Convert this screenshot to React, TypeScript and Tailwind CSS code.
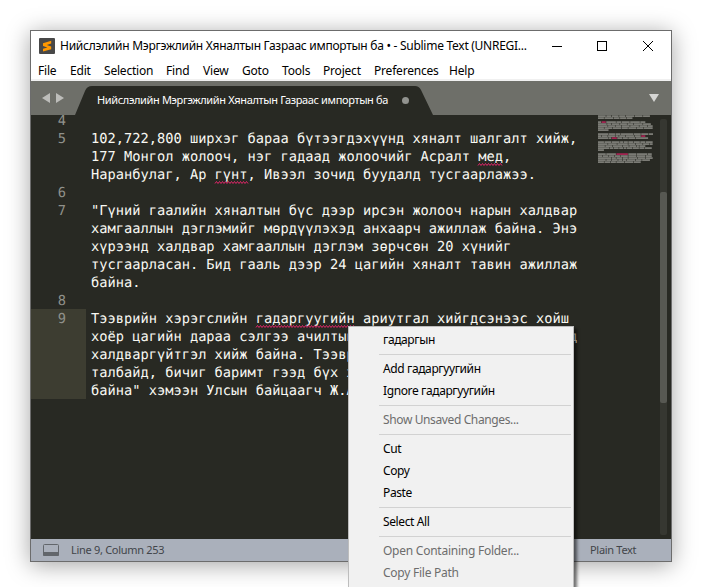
import React from "react";

type Line = { n?: number; text: string; wavy?: string; active?: boolean };

const lines: Line[] = [
  { n: 4, text: "" },
  { n: 5, text: "102,722,800 ширхэг бараа бүтээгдэхүүнд хяналт шалгалт хийж," },
  { text: "177 Монгол жолооч, нэг гадаад жолоочийг Асралт мед,", wavy: "мед" },
  { text: "Наранбулаг, Ар гүнт, Ивээл зочид буудалд тусгаарлажээ.", wavy: "гүнт" },
  { n: 6, text: "" },
  { n: 7, text: '"Гүний гаалийн хяналтын бүс дээр ирсэн жолооч нарын халдвар' },
  { text: "хамгааллын дэглэмийг мөрдүүлэхэд анхаарч ажиллаж байна. Энэ" },
  { text: "хүрээнд халдвар хамгааллын дэглэм зөрчсөн 20 хүнийг" },
  { text: "тусгаарласан. Бид гааль дээр 24 цагийн хяналт тавин ажиллаж" },
  { text: "байна." },
  { n: 8, text: "" },
  { n: 9, active: true, text: "Тээврийн хэрэгслийн гадаргуугийн ариутгал хийгдсэнээс хойш", wavy: "гадаргуугийн" },
  { active: true, text: "хоёр цагийн дараа сэлгээ ачилтын                          д" },
  { active: true, text: "халдваргүйтгэл хийж байна. Тээвр" },
  { active: true, text: "талбайд, бичиг баримт гээд бүх х" },
  { active: true, text: 'байна" хэмээн Улсын байцаагч Ж.А' },
];

function Wavy({ chars }: { chars: number }) {
  const w = chars * 8.25;
  let d = "M0 2.5";
  for (let x = 1.5, i = 0; x <= w; x += 1.5, i++) d += ` L${x} ${i % 2 ? 2.5 : 0.5}`;
  return (
    <svg className="absolute left-0 top-[14px] overflow-visible" width={w} height="3">
      <path d={d} fill="none" stroke="#f0266f" strokeWidth="0.9" />
    </svg>
  );
}

function CodeText({ line }: { line: Line }) {
  if (!line.wavy) return <>{line.text}</>;
  const [before, after] = line.text.split(line.wavy);
  return (
    <>
      {before}
      <span className="relative">
        {line.wavy}
        <Wavy chars={line.wavy.length} />
      </span>
      {after}
    </>
  );
}

// Word lengths of each minimap row; an empty array marks a blank row.
const mini: number[][] = [
  [8, 5, 7, 6, 9, 8, 7],
  [6, 9, 6, 6, 6],
  [],
  [3, 4, 10, 5, 8, 10, 5],
  [9, 4, 8, 7, 6, 9, 8],
  [10, 7, 6, 8, 9, 8, 5],
  [6, 8, 9, 6, 8, 7, 9],
  [11],
  [],
  [11, 6, 5, 13, 7, 7, 5],
  [3, 6, 7, 3, 6, 9, 6, 4],
  [11, 2, 5, 5, 5, 7, 13],
  [],
  [6, 7, 8, 3, 4, 5, 6, 5, 7],
  [10, 9, 11, 7, 7, 6, 3],
  [7, 7, 10, 6, 7, 2, 6],
  [12, 3, 5, 4, 2, 6, 6, 5, 7],
  [6],
  [],
  [8, 10, 12, 8, 11, 4],
  [4, 6, 5, 6, 7, 8, 9, 6],
  [14, 4, 6, 5, 9, 8, 7],
  [8, 5, 6, 4, 3, 9, 6, 8],
  [6, 6, 5, 8, 9, 7],
];
const flagged = ["3-1", "10-7", "11-2", "19-2"];

function Minimap() {
  const rects: React.ReactNode[] = [];
  mini.forEach((row, r) => {
    let x = 0;
    row.forEach((w, i) => {
      const hot = flagged.includes(`${r}-${i}`);
      rects.push(
        <rect key={`${r}-${i}`} x={x * 0.92} y={r * 2 + 0.3} width={w * 0.92 + 0.4} height="1.6" fill={hot ? "#c0245c" : "#9c9c96"} fillOpacity={hot ? 0.9 : 0.8} />
      );
      x += w + 1;
    });
  });
  return (
    <svg className="block" width="55" height="50">
      {rects}
    </svg>
  );
}

const menuItems = [
  { label: "File", w: "w-[32px]" },
  { label: "Edit", w: "w-[34px]" },
  { label: "Selection", w: "w-[62px]" },
  { label: "Find", w: "w-[37px]" },
  { label: "View", w: "w-[39px]" },
  { label: "Goto", w: "w-[40px]" },
  { label: "Tools", w: "w-[41px]" },
  { label: "Project", w: "w-[51px]" },
  { label: "Preferences", w: "w-[75px]" },
  { label: "Help", w: "w-[40px]" },
];

function Divider() {
  return <div className="ml-[30px] mr-[2px] h-[7px] pt-[3px]"><div className="h-px bg-[#d2d2d2]" /></div>;
}

function Item({ children, off }: { children: React.ReactNode; off?: boolean }) {
  return <div className={`h-[22px] pl-[34px] leading-[22px] whitespace-nowrap ${off ? "text-[#6d6d6d]" : "text-black"}`}>{children}</div>;
}

export default function App() {
  return (
    <div className="relative h-[587px] w-[701px] overflow-hidden bg-white p-[30px] pr-[29px] font-['Noto_Sans','Open_Sans',sans-serif] text-[12px]">
      <div className="flex h-[532px] w-[642px] flex-col border border-[#6c6c6c] bg-white shadow-[0_3px_22px_rgba(0,0,0,0.36)]">
        <div className="flex h-[29px] shrink-0 items-center pl-[8px]">
          <svg width="16" height="16" viewBox="0 0 16 16">
            <rect width="16" height="16" rx="1" fill="#484848" />
            <path d="M12.2 2.8v2.7L7.8 6.9l4.4 1.5v2.9L4 13.6v-2.8l4.4-1.4L4 7.9V5.2z" fill="#ff9800" />
          </svg>
          <div className="mt-px ml-[5px] w-[490px] whitespace-pre text-[12px] tracking-[-0.27px] text-black">
            Нийслэлийн Мэргэжлийн Хяналтын Газраас импортын ба • - Sublime Text (UNREGI...
          </div>
          <svg className="ml-[2px]" width="102" height="12" fill="none" stroke="#000" shapeRendering="crispEdges">
            <path d="M0 6.5h10M45.5 1.5h9v9h-9z" />
            <path d="M91 1l10 10M101 1L91 11" shapeRendering="auto" />
          </svg>
        </div>
        <div className="flex h-[21px] shrink-0 items-center border-b-2 border-[#f0f0f0] pt-[2px] pl-[7px] tracking-[-0.2px] text-black">
          {menuItems.map((m) => (
            <div key={m.label} className={`${m.w} shrink-0 whitespace-nowrap`}>{m.label}</div>
          ))}
        </div>
        <div className="relative flex h-[34px] shrink-0 items-center bg-[#6e6f69]">
          <svg className="absolute left-0 top-0" width="640" height="34">
            <path d="M44 34 L54 10 Q56 5 61 5 H384 Q388 5 390 9 L402 34z" fill="#282923" />
            <path d="M19 12v10l-8-5zM25 12v10l8-5z" fill="#bdbdba" />
            <path d="M618 13h10l-5 8z" fill="#d5d5d3" />
            <circle cx="374.5" cy="19.5" r="3.5" fill="#92938f" />
          </svg>
          <div className="relative mt-[5px] ml-[66px] whitespace-nowrap text-[11px] tracking-[-0.36px] text-white">
            Нийслэлийн Мэргэжлийн Хяналтын Газраас импортын ба
          </div>
        </div>
        <div className="flex h-[424px] shrink-0 overflow-hidden bg-[#282923]">
          <div className="-mt-[4px] w-[567px] shrink-0 font-['DejaVu_Sans_Mono',monospace] text-[13.7px] leading-[20px] [text-rendering:geometricPrecision]">
            {lines.map((l, i) => (
              <div key={i} className="flex h-[18px]">
                <div className={`w-[55px] pr-[20px] text-right text-[#90918b] ${l.active ? "bg-[#3d3d31]" : ""}`}>{l.n}</div>
                <div className="relative pl-[5px] whitespace-pre text-[#f8f8f2]"><CodeText line={l} /></div>
              </div>
            ))}
          </div>
          <div className="w-[62px] shrink-0"><Minimap /></div>
          <div className="mt-[4px] h-[416px] w-[7px] rounded-[2px] bg-[#363731] pt-[73px]">
            <div className="h-[211px] rounded-[2px] bg-[#575852]" />
          </div>
        </div>
        <div className="flex h-[22px] shrink-0 items-center bg-[#aab0bb] pl-[12px] text-[11px] tracking-[-0.3px] text-[#42454a]">
          <svg width="16" height="12">
            <rect x="0.5" y="0.5" width="15" height="11" rx="1" fill="none" stroke="#62666b" />
            <rect x="0" y="8" width="16" height="4" rx="1" fill="#62666b" />
          </svg>
          <div className="ml-[12px] w-[519px]">Line 9, Column 253</div>
          <div className="whitespace-nowrap">Plain Text</div>
        </div>
      </div>
      <div className="absolute left-[348px] top-[326px] h-[300px] w-[226px] border border-[#bdbdbd] bg-[#f1f1f1] pt-[2px] text-[12px] tracking-[-0.38px] shadow-[3px_3px_3px_rgba(0,0,0,0.55)]">
        <Item>гадаргын</Item>
        <Divider />
        <Item>Add гадаргуугийн</Item>
        <Item>Ignore гадаргуугийн</Item>
        <Divider />
        <Item off>Show Unsaved Changes...</Item>
        <Divider />
        <Item>Cut</Item>
        <Item>Copy</Item>
        <Item>Paste</Item>
        <Divider />
        <Item>Select All</Item>
        <Divider />
        <Item off><span className="tracking-[-0.25px]">Open Containing Folder...</span></Item>
        <Item off><span className="tracking-[-0.25px]">Copy File Path</span></Item>
      </div>
    </div>
  );
}
